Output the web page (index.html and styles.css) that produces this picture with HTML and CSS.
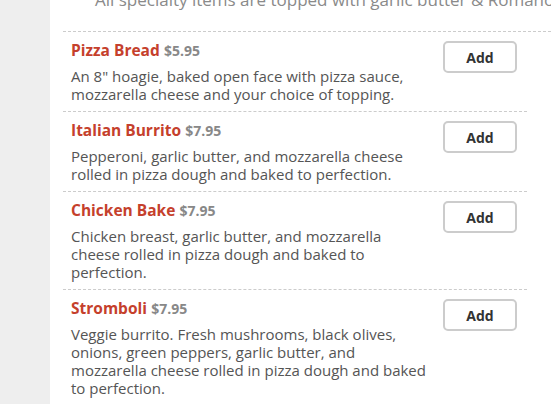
FILE: index.html
```html
<!DOCTYPE html>
<html lang="en">
<head>
    <meta charset="UTF-8">
    <meta name="viewport" content="width=device-width, initial-scale=1.0">
    <title>Specialty Items</title>
    <link rel="stylesheet" href="styles.css">
</head>
<body>
    <div class="page">
        <div class="sidebar"></div>
        <div class="panel">
            <div class="section-head">
                <p class="section-note">All specialty items are topped with garlic butter &amp; Romano</p>
            </div>
            <ul class="menu-list">
                <li class="menu-item">
                    <div class="item-info">
                        <div class="item-title">
                            <span class="item-name">Pizza Bread</span>
                            <span class="item-price">$5.95</span>
                        </div>
                        <p class="item-desc">An 8" hoagie, baked open face with pizza sauce, mozzarella cheese and your choice of topping.</p>
                    </div>
                    <button type="button" class="add-btn">Add</button>
                </li>
                <li class="menu-item">
                    <div class="item-info">
                        <div class="item-title">
                            <span class="item-name">Italian Burrito</span>
                            <span class="item-price">$7.95</span>
                        </div>
                        <p class="item-desc">Pepperoni, garlic butter, and mozzarella cheese rolled in pizza dough and baked to perfection.</p>
                    </div>
                    <button type="button" class="add-btn">Add</button>
                </li>
                <li class="menu-item">
                    <div class="item-info">
                        <div class="item-title">
                            <span class="item-name">Chicken Bake</span>
                            <span class="item-price">$7.95</span>
                        </div>
                        <p class="item-desc">Chicken breast, garlic butter, and mozzarella cheese rolled in pizza dough and baked to perfection.</p>
                    </div>
                    <button type="button" class="add-btn">Add</button>
                </li>
                <li class="menu-item">
                    <div class="item-info">
                        <div class="item-title">
                            <span class="item-name">Stromboli</span>
                            <span class="item-price">$7.95</span>
                        </div>
                        <p class="item-desc">Veggie burrito. Fresh mushrooms, black olives, onions, green peppers, garlic butter, and mozzarella cheese rolled in pizza dough and baked to perfection.</p>
                    </div>
                    <button type="button" class="add-btn">Add</button>
                </li>
            </ul>
        </div>
    </div>
</body>
</html>
```

FILE: styles.css
```css
body {
    margin: 0;
    padding: 0;
    font-family: "Open Sans", Arial, sans-serif;
    background-color: #fff;
    overflow: hidden;
}
.page {
    display: flex;
    min-height: 404px;
}
.sidebar {
    width: 50px;
    flex-shrink: 0;
    background-color: #eeeeee;
}
.panel {
    flex: 1;
    min-width: 0;
    padding-left: 13px;
    overflow: hidden;
}
.section-head {
    margin-top: -12px;
    padding: 0 0 19px 32px;
    border-bottom: 1px dashed #ccc;
    white-space: nowrap;
}
.section-note {
    margin: 0;
    font-size: 17px;
    line-height: 24px;
    color: #8a8a8a;
}
.menu-list {
    list-style: none;
    margin: 0;
    padding: 0;
    width: 464px;
}
.menu-item {
    display: flex;
    align-items: flex-start;
    padding: 8px 10px 8px 8px;
    border-bottom: 1px dashed #ccc;
}
.menu-item:last-child {
    border-bottom: none;
}
.item-info {
    width: 356px;
}
.item-title {
    line-height: 20px;
    margin-bottom: 6px;
}
.item-name {
    font-size: 15.5px;
    font-weight: bold;
    color: #c5402c;
}
.item-price {
    font-size: 14px;
    font-weight: bold;
    color: #888;
}
.item-desc {
    margin: 0;
    font-size: 15px;
    line-height: 18px;
    color: #555;
}
.add-btn {
    margin: 1px 0 0 auto;
    width: 74px;
    height: 32px;
    background-color: #fff;
    border: 2px solid #ccc;
    border-radius: 5px;
    font-family: "Open Sans", Arial, sans-serif;
    font-size: 14px;
    font-weight: bold;
    color: #333;
    cursor: pointer;
}
```
